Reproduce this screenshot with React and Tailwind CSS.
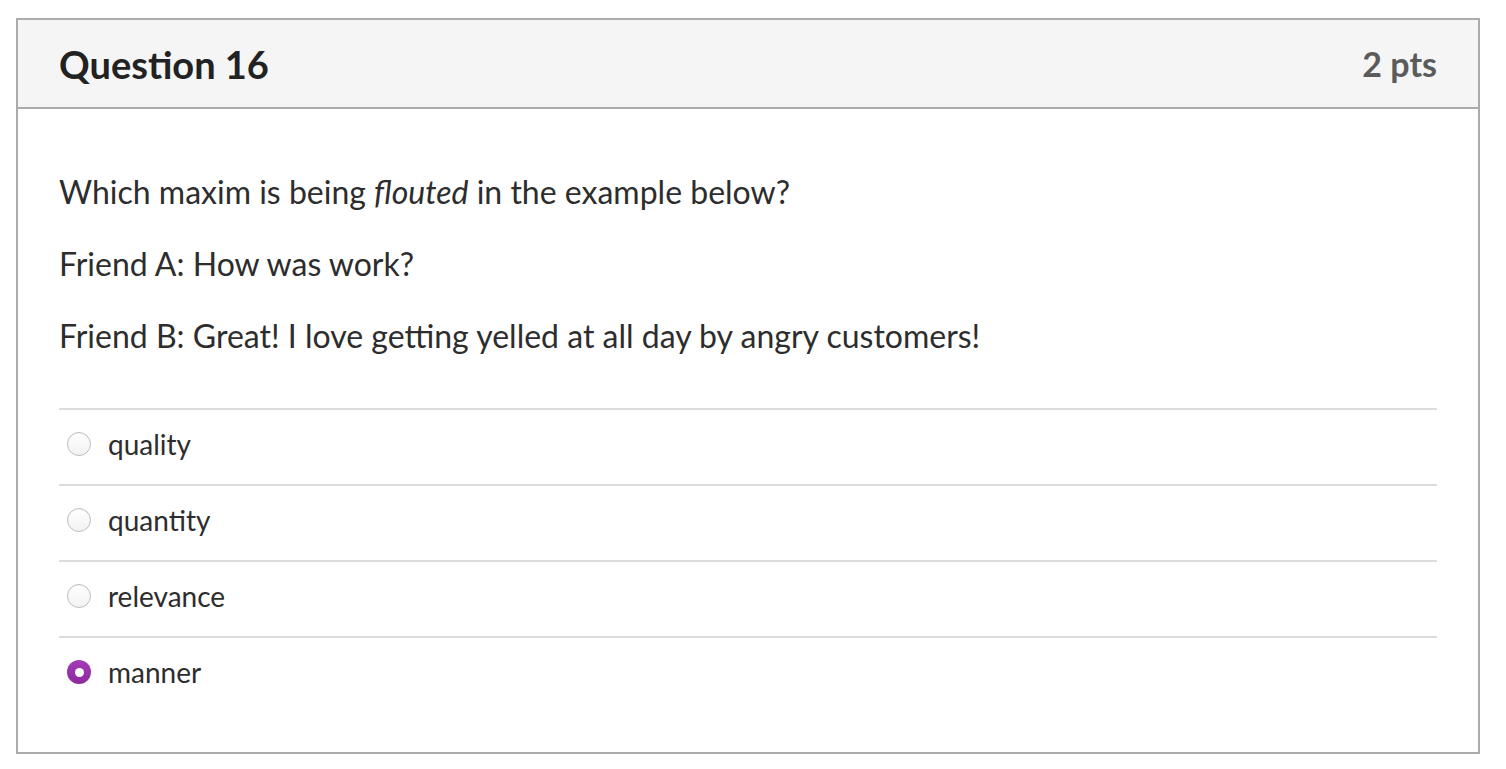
import React from "react";

const answers = [
  { label: "quality", selected: false },
  { label: "quantity", selected: false },
  { label: "relevance", selected: false },
  { label: "manner", selected: true },
];

function Radio({ selected }) {
  if (selected) {
    return (
      <span className="flex h-[24px] w-[24px] shrink-0 items-center justify-center rounded-full bg-gradient-to-b from-[#a43cb6] to-[#8c2a9c]">
        <span className="h-[9px] w-[9px] rounded-full bg-white" />
      </span>
    );
  }
  return (
    <span className="h-[24px] w-[24px] shrink-0 rounded-full border border-[#bebebe] bg-gradient-to-b from-white to-[#f2f2f2] shadow-[inset_0_1px_1px_rgba(0,0,0,0.05)]" />
  );
}

export default function App() {
  return (
    <div className="min-h-[769px] bg-white pl-[16px] pt-[18px] font-['Lato','Noto_Sans',sans-serif] text-[#2d2d2d]">
      <div className="w-[1464px] border-2 border-[#ababab]">
        <div className="flex h-[89px] items-center justify-between border-b-2 border-[#ababab] bg-[#f5f5f5] px-[41px]">
          <h2 className="text-[38px] font-bold leading-none text-[#222]">Question 16</h2>
          <span className="text-[34px] font-bold leading-none text-[#5b5b5b]">2 pts</span>
        </div>
        <div className="px-[41px] pb-[40px] pt-[59px]">
          <div className="text-[32px] leading-[48px]">
            <p>
              Which maxim is being <em>flouted</em> in the example below?
            </p>
            <p className="mt-[24px]">Friend A: How was work?</p>
            <p className="mt-[24px]">Friend B: Great! I love getting yelled at all day by angry customers!</p>
          </div>
          <div className="mt-[48px]">
            {answers.map((a) => (
              <div
                key={a.label}
                className="flex h-[76px] items-center gap-[17px] border-t-2 border-[#dcdcdc] pb-[6px] pl-[8px] text-[28px]"
              >
                <Radio selected={a.selected} />
                <span>{a.label}</span>
              </div>
            ))}
          </div>
        </div>
      </div>
    </div>
  );
}
